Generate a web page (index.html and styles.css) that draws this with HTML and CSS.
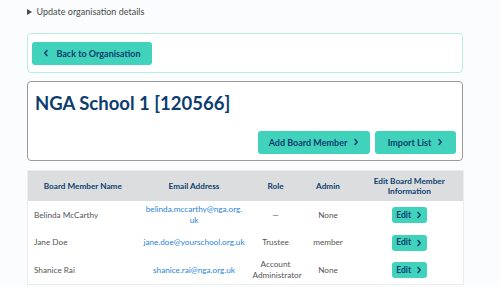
FILE: index.html
```html
<!DOCTYPE html>
<html lang="en">
<head>
  <meta charset="UTF-8">
  <meta name="viewport" content="width=device-width, initial-scale=1.0">
  <title>NGA School 1 - Board Members</title>
  <link rel="stylesheet" href="styles.css">
</head>
<body>
  <div class="page">
    <details class="org-details">
      <summary>Update organisation details</summary>
    </details>

    <div class="panel panel-back">
      <a class="btn" href="#">
        <svg class="chev" viewBox="0 0 6 8" width="6" height="8"><polyline points="4,1.5 1.8,4 4,6.5"/></svg>
        Back to Organisation
      </a>
    </div>

    <div class="panel panel-school">
      <h1>NGA School 1 [120566]</h1>
      <div class="actions">
        <a class="btn" href="#">Add Board Member
          <svg class="chev" viewBox="0 0 6 8" width="6" height="8"><polyline points="2,1.5 4.2,4 2,6.5"/></svg>
        </a>
        <a class="btn" href="#">Import List
          <svg class="chev" viewBox="0 0 6 8" width="6" height="8"><polyline points="2,1.5 4.2,4 2,6.5"/></svg>
        </a>
      </div>
    </div>

    <table class="members">
      <colgroup>
        <col class="c-name">
        <col class="c-email">
        <col class="c-role">
        <col class="c-admin">
        <col class="c-edit">
      </colgroup>
      <thead>
        <tr>
          <th>Board Member Name</th>
          <th>Email Address</th>
          <th>Role</th>
          <th>Admin</th>
          <th>Edit Board Member Information</th>
        </tr>
      </thead>
      <tbody>
        <tr>
          <td class="name">Belinda McCarthy</td>
          <td><a href="#">belinda.mccarthy@nga.org.<br>uk</a></td>
          <td>&mdash;</td>
          <td>None</td>
          <td><a class="btn btn-sm" href="#">Edit <svg class="chev" viewBox="0 0 6 8" width="6" height="8"><polyline points="2,1.5 4.2,4 2,6.5"/></svg></a></td>
        </tr>
        <tr>
          <td class="name">Jane Doe</td>
          <td><a href="#">jane.doe@yourschool.org.uk</a></td>
          <td>Trustee</td>
          <td>member</td>
          <td><a class="btn btn-sm" href="#">Edit <svg class="chev" viewBox="0 0 6 8" width="6" height="8"><polyline points="2,1.5 4.2,4 2,6.5"/></svg></a></td>
        </tr>
        <tr>
          <td class="name">Shanice Rai</td>
          <td><a href="#">shanice.rai@nga.org.uk</a></td>
          <td>Account Administrator</td>
          <td>None</td>
          <td><a class="btn btn-sm" href="#">Edit <svg class="chev" viewBox="0 0 6 8" width="6" height="8"><polyline points="2,1.5 4.2,4 2,6.5"/></svg></a></td>
        </tr>
      </tbody>
    </table>
  </div>
</body>
</html>
```

FILE: styles.css
```css
body {
  margin: 0;
  background: #fafcfe;
  font-family: 'Lato', 'Open Sans', sans-serif;
  color: #444;
}
.page {
  width: 436px;
  margin-left: 27px;
  padding-top: 5px;
}
.org-details summary {
  font-size: 9px;
  line-height: 14px;
  color: #4a4a4a;
  cursor: pointer;
}
.panel {
  background: #fff;
  border-radius: 4px;
}
.panel-back {
  margin-top: 14px;
  border: 1px solid #b6eee0;
  padding: 7px 4px;
}
.panel-school {
  margin-top: 8px;
  border: 1px solid #9a9a9a;
  padding: 10px 6px 6px 7px;
}
h1 {
  margin: 0;
  font-size: 18.5px;
  line-height: 22px;
  font-weight: 700;
  color: #0c3d6e;
}
.actions {
  display: flex;
  justify-content: flex-end;
  gap: 5px;
  margin-top: 17px;
}
.btn {
  display: inline-flex;
  align-items: center;
  justify-content: center;
  gap: 6px;
  height: 23px;
  padding: 0;
  box-sizing: border-box;
  background: #40d2bb;
  border-radius: 3px;
  color: #0c3d6e;
  font-size: 9px;
  font-weight: 700;
  white-space: nowrap;
  text-decoration: none;
}
.panel-back .btn {
  width: 120px;
  gap: 7px;
}
.actions .btn:first-child {
  width: 112px;
}
.actions .btn:last-child {
  width: 81px;
}
.chev {
  fill: none;
  stroke: #0c3d6e;
  stroke-width: 1.5;
  stroke-linecap: round;
  stroke-linejoin: round;
}
.members {
  margin-top: 9px;
  width: 436px;
  border-collapse: collapse;
  table-layout: fixed;
  background: #fff;
  border: 1px solid #ececec;
  font-size: 8.2px;
}
.c-name { width: 110px; }
.c-email { width: 113px; }
.c-role { width: 50px; }
.c-admin { width: 55px; }
.c-edit { width: 108px; }
.members thead tr {
  height: 31px;
  background: #dcdddf;
}
.members th {
  padding: 3px 10px;
  color: #0c3d6e;
  font-weight: 700;
  line-height: 10px;
  text-align: center;
}
.members tbody tr {
  height: 27px;
}
.members td {
  padding: 3px 2px;
  line-height: 11px;
  text-align: center;
  color: #555;
}
.members td.name {
  text-align: left;
  padding-left: 6px;
}
.members td a {
  color: #2a85d6;
  text-decoration: none;
}
.members td .btn-sm {
  height: 16px;
  width: 35px;
  gap: 5px;
  color: #0c3d6e;
  font-size: 8.5px;
}
```
